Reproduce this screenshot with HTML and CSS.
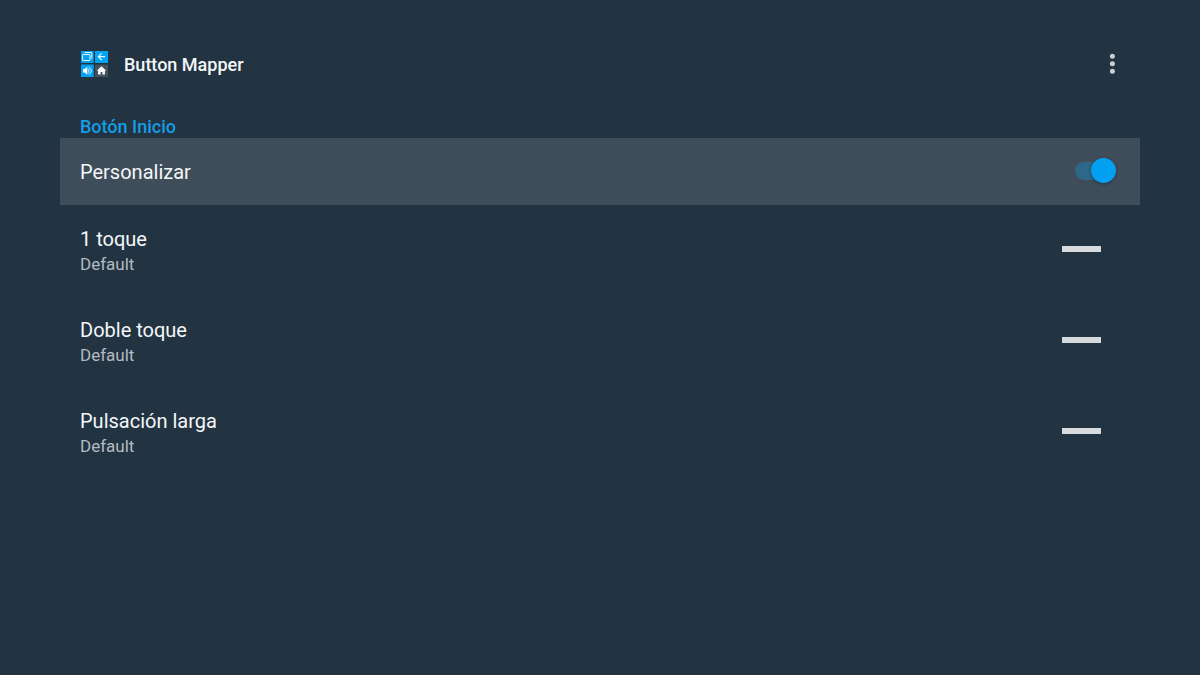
FILE: index.html
```html
<!DOCTYPE html>
<html lang="es">
<head>
<meta charset="utf-8">
<meta name="viewport" content="width=device-width, initial-scale=1">
<title>Button Mapper</title>
<link rel="stylesheet" href="styles.css">
</head>
<body>
<div class="screen">
  <header class="app-bar">
    <svg class="logo" viewBox="0 0 27 28" aria-hidden="true">
      <path fill="#03a3f3" d="M0 1h12.700v12H0zM14 1h13v12H14zM0 14.600h12.700V27H0z"/>
      <path fill="#46515e" d="M14 14.600h13V27H14z"/>
      <g fill="none" stroke="#e8f5fd">
        <rect x="1.500" y="4.500" width="7.500" height="6" rx=".6"/>
        <path d="M3.500 2.500h6.500q.8 0 .8.8v5.200"/>
        <path stroke-width="1.200" d="M24 6.700h-6.600M20.600 3.400l-3.300 3.300 3.300 3.300"/>
        <path d="M7.300 18.900q1.500 1.900 0 3.900M7.700 17q5.400 3.800 0 7.600"/>
      </g>
      <path fill="#fff" d="M2 19.100h1.700l2.600-2.300v8L3.700 22.500H2zM20.500 16.300l4.700 4.400h-1.300v3.900h-2.500v-2.700h-1.800v2.700h-2.500v-3.900h-1.300z"/>
    </svg>
    <h1 class="app-title">Button Mapper</h1>
    <button class="overflow" type="button" aria-label="Más opciones">
      <svg class="dots" viewBox="0 0 6 22" aria-hidden="true">
        <circle cx="3.400" cy="3.200" r="2.500"/><circle cx="3.400" cy="10.700" r="2.500"/><circle cx="3.400" cy="18.200" r="2.500"/>
      </svg>
    </button>
  </header>
  <main class="settings">
    <h2 class="section-title">Botón Inicio</h2>
    <label class="toggle-row">
      <span class="row-title">Personalizar</span>
      <input class="switch" type="checkbox" role="switch" checked>
    </label>
    <button class="action-row" type="button">
      <span class="row-text"><span class="row-title">1 toque</span><span class="row-summary">Default</span></span>
      <span class="dash"></span>
    </button>
    <button class="action-row" type="button">
      <span class="row-text"><span class="row-title">Doble toque</span><span class="row-summary">Default</span></span>
      <span class="dash"></span>
    </button>
    <button class="action-row" type="button">
      <span class="row-text"><span class="row-title">Pulsación larga</span><span class="row-summary">Default</span></span>
      <span class="dash"></span>
    </button>
  </main>
</div>
</body>
</html>
```
FILE: styles.css
```css
* {
  box-sizing: border-box;
}

body {
  margin: 0;
  min-height: 100vh;
  background: #223341;
  color: #f4f7f9;
  font-family: Roboto, "Liberation Sans", sans-serif;
}

button {
  border: 0;
  background: none;
  color: inherit;
  font: inherit;
  cursor: pointer;
}

.screen {
  padding: 32px 60px;
}

.app-bar {
  display: flex;
  align-items: center;
  height: 64px;
  padding: 0 16px 0 21px;
}

.logo {
  width: 27px;
  height: 28px;
}

.app-title {
  margin: 0 auto 0 16px;
  padding-top: 2px;
  font-size: 18px;
  line-height: 24px;
  font-weight: 500;
}

.overflow {
  display: flex;
  justify-content: center;
  width: 24px;
  padding: 4px 0;
}

.dots {
  width: 6px;
  height: 22px;
  fill: #c9cfd5;
}

.section-title {
  margin: 0;
  padding: 20px 20px 0;
  color: #169de3;
  font-size: 18px;
  line-height: 22px;
  font-weight: 500;
}

.toggle-row {
  display: flex;
  align-items: center;
  justify-content: space-between;
  min-height: 67px;
  padding: 0 24px 0 20px;
  background: #3f4c59;
  cursor: pointer;
}

.action-row {
  display: flex;
  align-items: center;
  justify-content: space-between;
  width: 100%;
  padding: 20px 39px 20px 20px;
  text-align: left;
}

.row-text {
  display: flex;
  flex-direction: column;
}

.row-title {
  font-size: 20px;
  line-height: 28px;
}

.row-summary {
  color: #b4bbc1;
  font-size: 17px;
  line-height: 23px;
}

.dash {
  width: 39px;
  height: 6px;
  margin-bottom: 4px;
  background: #d8dbde;
}

.switch {
  appearance: none;
  position: relative;
  width: 41px;
  height: 27px;
  margin: 0;
  cursor: pointer;
}

.switch::before {
  content: "";
  position: absolute;
  inset: 4px 1px 5px 0;
  border-radius: 9px;
  background: #2d6889;
}

.switch::after {
  content: "";
  position: absolute;
  top: 0;
  left: 0;
  width: 25px;
  height: 25px;
  border-radius: 50%;
  background: #b4bbc1;
  box-shadow: 0 1px 3px #17232e99;
}

.switch:checked::after {
  right: 0;
  left: auto;
  background: #03a0f1;
}
```
